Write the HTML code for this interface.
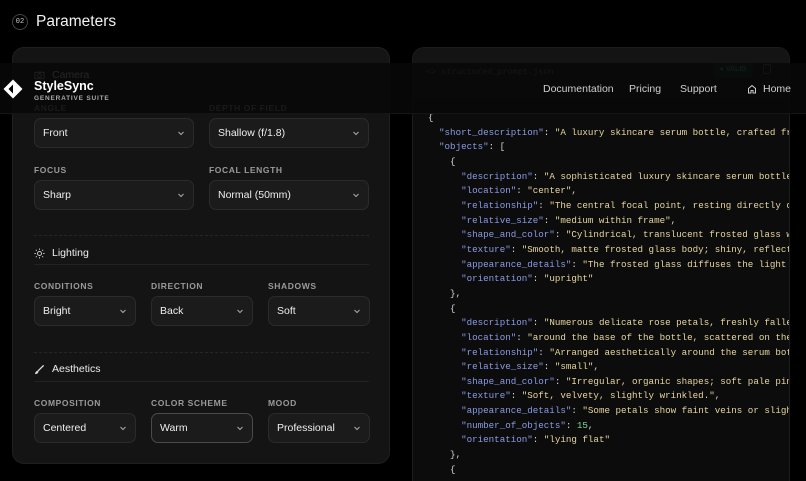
<!DOCTYPE html>
<html style="width:806px;height:481px;overflow:hidden"><head><meta charset="utf-8"><style>
*{box-sizing:border-box;margin:0;padding:0}
body{width:806px;height:481px;overflow:hidden;background:#000;font-family:"Liberation Sans",sans-serif;color:#e8e8e8;position:relative}
.abs{position:absolute}
.lp{left:12px;top:47px;width:378px;height:417px;background:#141414;border:1px solid #1f1f1f;border-radius:12px}
.rp{left:412px;top:47px;width:378px;height:434px;background:#0c0c0c;border:1px solid #1c1c1c;border-bottom:none;border-radius:12px 12px 0 0;overflow:hidden}
.lbl{font-size:8.5px;letter-spacing:.6px;color:#9a9a9a;font-weight:bold}
.dd{height:30px;background:#1b1b1b;border:1px solid #2b2b2b;border-radius:7px;font-size:10.5px;color:#eee;padding:0 8px;display:flex;align-items:center;justify-content:space-between}
.dd svg{width:8px;height:8px}
.h{font-size:10.5px;color:#eee;display:flex;align-items:center;gap:7px}
.line{height:1px;background:#222}
.dash{border-top:1px dashed #262626;height:0}
pre{font-family:"Liberation Mono",monospace;font-size:9.2px;line-height:14.65px;color:#d4d4d4;white-space:pre}
.k{color:#8c9be6}.s{color:#e6d6a0}.n{color:#7fd7a0}
.hdr{left:0;top:63px;width:806px;height:51px;background:rgba(8,8,8,.88);border-bottom:1px solid #151515}
.nav{font-size:10.5px;color:#cfcfcf}
</style></head><body>
<div class="abs" style="left:12px;top:14px;width:16px;height:16px;border:1px solid #444;border-radius:50%;font-size:7px;text-align:center;line-height:14px;color:#ccc;font-family:'Liberation Mono',monospace">02</div>
<div class="abs" style="left:36px;top:13px;font-size:15.5px;color:#f2f2f2">Parameters</div>

<div class="abs lp"></div>
<div class="abs h" style="left:34px;top:69px;color:#eee"><svg width="11" height="10" viewBox="0 0 12 10"><rect x="1" y="2" width="10" height="7" rx="1" fill="none" stroke="#ccc"/><circle cx="6" cy="5.5" r="2" fill="none" stroke="#ccc"/></svg>Camera</div>
<div class="abs lbl" style="left:34px;top:103px">ANGLE</div>
<div class="abs lbl" style="left:209px;top:103px">DEPTH OF FIELD</div>
<div class="abs dd" style="left:34px;top:118px;width:160px">Front<svg viewBox="0 0 8 8"><path d="M1.5 3l2.5 2.5L6.5 3" fill="none" stroke="#aaa"/></svg></div>
<div class="abs dd" style="left:209px;top:118px;width:160px">Shallow (f/1.8)<svg viewBox="0 0 8 8"><path d="M1.5 3l2.5 2.5L6.5 3" fill="none" stroke="#aaa"/></svg></div>
<div class="abs lbl" style="left:34px;top:165px">FOCUS</div>
<div class="abs lbl" style="left:209px;top:165px">FOCAL LENGTH</div>
<div class="abs dd" style="left:34px;top:180px;width:160px">Sharp<svg viewBox="0 0 8 8"><path d="M1.5 3l2.5 2.5L6.5 3" fill="none" stroke="#aaa"/></svg></div>
<div class="abs dd" style="left:209px;top:180px;width:160px">Normal (50mm)<svg viewBox="0 0 8 8"><path d="M1.5 3l2.5 2.5L6.5 3" fill="none" stroke="#aaa"/></svg></div>
<div class="abs dash" style="left:34px;top:235px;width:335px"></div>
<div class="abs h" style="left:34px;top:247px"><svg width="11" height="11" viewBox="0 0 12 12" stroke="#ccc" fill="none"><circle cx="6" cy="6" r="2.2"/><path d="M6 0.5v1.5M6 10v1.5M0.5 6h1.5M10 6h1.5M2 2l1 1M9 9l1 1M2 10l1-1M9 3l1-1"/></svg>Lighting</div>
<div class="abs line" style="left:34px;top:264px;width:335px"></div>
<div class="abs lbl" style="left:34px;top:281px">CONDITIONS</div>
<div class="abs lbl" style="left:151px;top:281px">DIRECTION</div>
<div class="abs lbl" style="left:268px;top:281px">SHADOWS</div>
<div class="abs dd" style="left:34px;top:296px;width:102px">Bright<svg viewBox="0 0 8 8"><path d="M1.5 3l2.5 2.5L6.5 3" fill="none" stroke="#aaa"/></svg></div>
<div class="abs dd" style="left:151px;top:296px;width:102px">Back<svg viewBox="0 0 8 8"><path d="M1.5 3l2.5 2.5L6.5 3" fill="none" stroke="#aaa"/></svg></div>
<div class="abs dd" style="left:268px;top:296px;width:102px">Soft<svg viewBox="0 0 8 8"><path d="M1.5 3l2.5 2.5L6.5 3" fill="none" stroke="#aaa"/></svg></div>
<div class="abs dash" style="left:34px;top:352px;width:335px"></div>
<div class="abs h" style="left:34px;top:363px"><svg width="11" height="11" viewBox="0 0 12 12"><path d="M10.5 1.5L4 8" stroke="#ddd" stroke-width="1.4"/><path d="M4 7.5c-2 0-2.5 2-3 3.5c2 0 3.5-.5 3.8-2.5z" fill="#ddd"/></svg>Aesthetics</div>
<div class="abs line" style="left:34px;top:381px;width:335px"></div>
<div class="abs lbl" style="left:34px;top:398px">COMPOSITION</div>
<div class="abs lbl" style="left:151px;top:398px">COLOR SCHEME</div>
<div class="abs lbl" style="left:268px;top:398px">MOOD</div>
<div class="abs dd" style="left:34px;top:413px;width:102px">Centered<svg viewBox="0 0 8 8"><path d="M1.5 3l2.5 2.5L6.5 3" fill="none" stroke="#aaa"/></svg></div>
<div class="abs dd" style="left:151px;top:413px;width:102px;border-color:#4a4a4a">Warm<svg viewBox="0 0 8 8"><path d="M1.5 3l2.5 2.5L6.5 3" fill="none" stroke="#aaa"/></svg></div>
<div class="abs dd" style="left:268px;top:413px;width:102px">Professional<svg viewBox="0 0 8 8"><path d="M1.5 3l2.5 2.5L6.5 3" fill="none" stroke="#aaa"/></svg></div>

<div class="abs rp">
<div class="abs" style="left:0;top:0;width:378px;height:50px;background:#141414"></div>
<div class="abs" style="left:13px;top:19px;font-family:'Liberation Mono',monospace;font-size:8.5px;color:#777">&lt;&gt; structured_prompt.json</div>
<div class="abs" style="left:300px;top:15px;width:40px;height:14px;background:#0f2a1a;border-radius:4px;font-size:7px;color:#3fbf70;font-weight:bold;line-height:14px;text-align:center">● VALID</div>
<div class="abs" style="left:350px;top:16px;width:8px;height:10px;border:1px solid #666;border-radius:2px"></div>
<pre class="abs" style="left:15px;top:63px">{
  <span class="k">"short_description"</span>: <span class="s">"A luxury skincare serum bottle, crafted from</span>
  <span class="k">"objects"</span>: [
    {
      <span class="k">"description"</span>: <span class="s">"A sophisticated luxury skincare serum bottle,</span>
      <span class="k">"location"</span>: <span class="s">"center"</span>,
      <span class="k">"relationship"</span>: <span class="s">"The central focal point, resting directly on</span>
      <span class="k">"relative_size"</span>: <span class="s">"medium within frame"</span>,
      <span class="k">"shape_and_color"</span>: <span class="s">"Cylindrical, translucent frosted glass wi</span>
      <span class="k">"texture"</span>: <span class="s">"Smooth, matte frosted glass body; shiny, reflecti</span>
      <span class="k">"appearance_details"</span>: <span class="s">"The frosted glass diffuses the light b</span>
      <span class="k">"orientation"</span>: <span class="s">"upright"</span>
    },
    {
      <span class="k">"description"</span>: <span class="s">"Numerous delicate rose petals, freshly fallen</span>
      <span class="k">"location"</span>: <span class="s">"around the base of the bottle, scattered on the</span>
      <span class="k">"relationship"</span>: <span class="s">"Arranged aesthetically around the serum bott</span>
      <span class="k">"relative_size"</span>: <span class="s">"small"</span>,
      <span class="k">"shape_and_color"</span>: <span class="s">"Irregular, organic shapes; soft pale pink</span>
      <span class="k">"texture"</span>: <span class="s">"Soft, velvety, slightly wrinkled."</span>,
      <span class="k">"appearance_details"</span>: <span class="s">"Some petals show faint veins or slight</span>
      <span class="k">"number_of_objects"</span>: <span class="n">15</span>,
      <span class="k">"orientation"</span>: <span class="s">"lying flat"</span>
    },
    {</pre>
</div>

<div class="abs hdr"></div>
<svg class="abs" style="left:3px;top:79px" width="20" height="20" viewBox="0 0 20 20"><path d="M10 0.5L19.5 10L10 19.5L0.5 10z" fill="#fff"/><path d="M10 5.5L5.5 10L10 14.5z" fill="#000"/></svg>
<div class="abs" style="left:34px;top:79px;font-size:12.5px;font-weight:bold;color:#fff">StyleSync</div>
<div class="abs" style="left:34px;top:95px;font-size:6.5px;font-weight:bold;letter-spacing:.8px;color:#aaa">GENERATIVE SUITE</div>
<div class="abs nav" style="left:543px;top:83px">Documentation</div>
<div class="abs nav" style="left:629px;top:83px">Pricing</div>
<div class="abs nav" style="left:680px;top:83px">Support</div>
<svg class="abs" style="left:747px;top:84px" width="10" height="10" viewBox="0 0 10 10" fill="none" stroke="#ccc"><path d="M1.5 4.5L5 1.5L8.5 4.5V9H6V6.5H4V9H1.5z"/></svg>
<div class="abs nav" style="left:763px;top:83px">Home</div>
</body></html>
